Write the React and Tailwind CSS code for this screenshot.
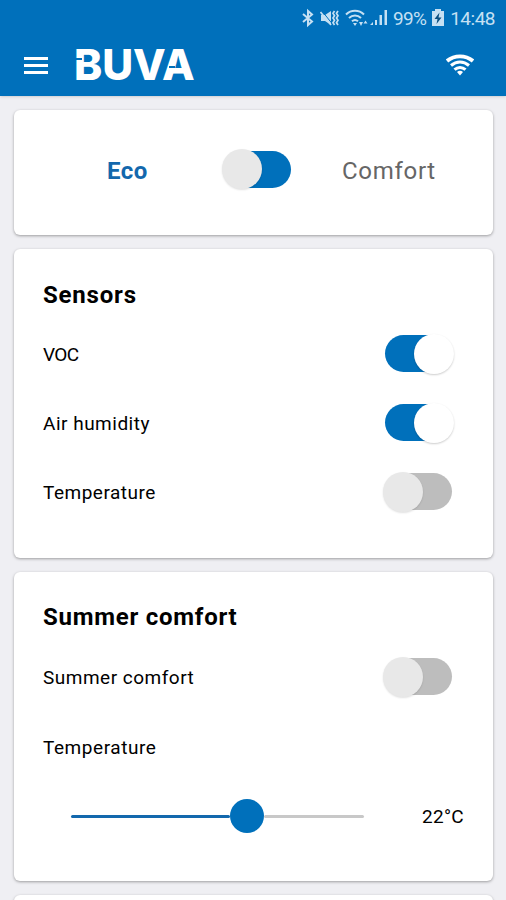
import React, { useState } from "react";

function StatusBar() {
  return (
    <div className="flex h-9 items-center justify-end pr-[11px] text-[#c5e0f3]">
      <svg className="h-5 w-[12px]" viewBox="0 0 12 20" fill="none" stroke="currentColor" strokeWidth="2">
        <path d="M1 6l9 7.500L6 17V3l4 3.500L1 14" />
      </svg>
      <svg className="ml-[6px] h-5 w-[19px]" viewBox="0 0 19 20" fill="none" stroke="currentColor">
        <path d="M1 7h4l6-4v14l-6-4H1z" fill="currentColor" stroke="none" />
        <path d="M2 3l10 12.500" stroke="#0070bb" strokeWidth="1" />
        <path d="M0.500 4l10.500 13" strokeWidth="1.700" />
        <path d="M14.500 3L13 5.300l1.500 2.400L13 10l1.500 2.300-1.500 2.400 1.500 2.300M18 3l-1.500 2.300L18 7.700 16.500 10l1.500 2.300-1.500 2.400L18 17" strokeWidth="1.700" />
      </svg>
      <svg className="ml-[6px] h-5 w-[23px]" viewBox="0 0 23 20" fill="none" stroke="currentColor" strokeWidth="2">
        <path d="M1 6.500c5-5 13-5 18 0M4 10c3.500-3.500 8.500-3.500 12 0M7 13.300c2-1.800 4-1.800 6 0" />
        <path d="M8 15h4l-2 3zM14 14h4l-2 4zM18.500 15.500l2-3 2 3z" fill="currentColor" stroke="none" />
      </svg>
      <svg className="ml-[2px] h-5 w-[18px]" viewBox="0 0 18 20" fill="currentColor">
        <path d="M0 17l3-3v3zM5 12h2v5H5zM9.500 7h2.500v10H9.500zM14.500 2h2.500v15h-2.500z" />
      </svg>
      <span className="ml-[5px] text-[19px] leading-none tracking-[-0.700px]">99%</span>
      <svg className="ml-[6px] h-5 w-[12px]" viewBox="0 0 12 20" fill="currentColor">
        <path d="M3 1h6v2h3v15H0V3h3z" />
        <path d="M7.500 4.500L2.500 11h3L4.500 16l5-6.500h-3z" fill="#0a4f80" />
      </svg>
      <span className="ml-[6px] text-[19px] leading-none tracking-[-0.500px]">14:48</span>
    </div>
  );
}

function Logo() {
  return (
    <div className="relative ml-[26px] pt-px font-['Inter'] text-[42.500px] font-extrabold leading-none tracking-[-0.100px]">
      BUVA
      {/* cuts in the B and the A */}
      <span className="absolute left-0 top-[15px] h-[2px] w-[8px] bg-[#0070bb]"></span>
      <span className="absolute right-[20px] top-[23px] h-[2px] w-[6px] bg-[#0070bb]"></span>
    </div>
  );
}

function Header() {
  return (
    <header className="h-24 bg-[#0070bb] text-white shadow-sm">
      <StatusBar />
      <div className="flex h-[58px] items-center pl-6 pr-8">
        <button className="flex w-6 flex-col gap-1">
          <span className="h-[3px] bg-white"></span>
          <span className="h-[3px] bg-white"></span>
          <span className="h-[3px] bg-white"></span>
        </button>
        <Logo />
        <svg className="ml-auto h-[22px] w-7" viewBox="0 0 28 22" fill="none" stroke="currentColor">
          <path d="M1 7c7.500-6.300 18.500-6.300 26 0" strokeWidth="3.800" />
          <path d="M5 11.500c5.500-4.600 12.500-4.600 18 0M8.500 15.700c3.300-2.900 7.700-2.900 11 0" strokeWidth="3.100" />
          <path d="M11 18c2-1.700 4-1.700 6 0l-3 3.500z" fill="currentColor" stroke="none" />
        </svg>
      </div>
    </header>
  );
}

function Switch({ on, flip, onChange }) {
  const right = flip ? !on : on;
  return (
    <button onClick={() => onChange(!on)} className={`flex h-[42px] w-[70px] items-center rounded-full ${right ? "justify-end" : "justify-start"}`}>
      <span className={`flex h-[37px] w-[68px] items-center rounded-full ${right ? "mr-px justify-end" : "justify-start"} ${on ? "bg-[#0070bb]" : "bg-[#bdbdbd]"}`}>
        <span className={`h-10 w-10 shrink-0 rounded-full ${right ? "-mr-px bg-white shadow-[0_1px_2px_rgba(0,0,0,0.2)]" : "-ml-px bg-[#e8e8e8] shadow-[0_1px_2px_rgba(0,0,0,0.12)]"}`}></span>
      </span>
    </button>
  );
}

function Row({ label, on, onChange, tight }) {
  return (
    <div className="flex h-[69px] items-center justify-between pr-[39px]">
      <span className={`pt-[3px] text-[19px] ${tight ? "tracking-[-0.700px]" : "tracking-[0.500px]"}`}>{label}</span>
      <Switch on={on} onChange={onChange} />
    </div>
  );
}

export default function App() {
  const [eco, setEco] = useState(true);
  const [voc, setVoc] = useState(true);
  const [humidity, setHumidity] = useState(true);
  const [temperature, setTemperature] = useState(false);
  const [summer, setSummer] = useState(false);

  const card = "rounded-md bg-white shadow-[0_1px_3px_rgba(0,0,0,0.35)]";

  return (
    <div className="h-[900px] w-[506px] overflow-hidden bg-[#efeff3] font-['Roboto',sans-serif] text-black">
      <Header />
      <main className="flex flex-col gap-[14px] pl-[14px] pr-[13px] pt-[14px]">
        <section className={`${card} flex h-[125px] items-center pb-1`}>
          <span className="w-[209px] pl-[93px] text-2xl font-bold tracking-[0.500px] text-[#1368ad]">Eco</span>
          <div className="pb-[3px]">
            <Switch on={eco} flip onChange={setEco} />
          </div>
          <span className="ml-[49px] text-2xl tracking-[0.700px] text-[#666]">Comfort</span>
        </section>

        <section className={`${card} h-[309px] pl-[29px] pt-[30px]`}>
          <h2 className="text-2xl font-bold leading-8 tracking-[0.800px]">Sensors</h2>
          <div className="pt-2">
            <Row label="VOC" tight on={voc} onChange={setVoc} />
            <Row label="Air humidity" on={humidity} onChange={setHumidity} />
            <Row label="Temperature" on={temperature} onChange={setTemperature} />
          </div>
        </section>

        <section className={`${card} h-[309px] pl-[29px] pt-[29px]`}>
          <h2 className="text-2xl font-bold leading-8 tracking-[0.750px]">Summer comfort</h2>
          <div className="pt-[9px]">
            <Row label="Summer comfort" on={summer} onChange={setSummer} />
            <div className="flex h-[72px] items-center pt-[3px] text-[19px] tracking-[0.550px]">Temperature</div>
          </div>
          <div className="flex h-[66px] items-center pl-[28px]">
            <span className="h-[3px] w-[159px] rounded-full bg-[#1368ad]"></span>
            <span className="h-[34px] w-[34px] rounded-full bg-[#0070bb]"></span>
            <span className="h-[3px] w-[100px] rounded-full bg-[#c8c8c8]"></span>
            <span className="ml-[58px] pt-[2px] text-[19px] tracking-[0.300px]">22°C</span>
          </div>
        </section>

        <section className={`${card} h-[100px] shrink-0`}></section>
      </main>
    </div>
  );
}
